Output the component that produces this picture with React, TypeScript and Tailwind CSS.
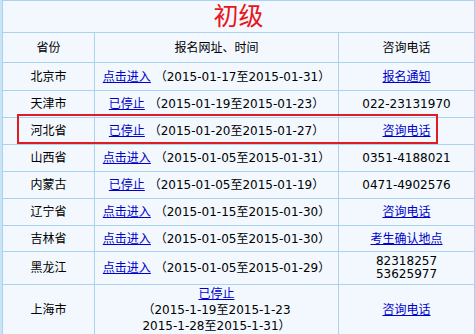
const rows = [
  { p: "北京市", link: "点击进入", time: "（2015-01-17至2015-01-31）", tel: "报名通知", telLink: true, h: "h-[28px]" },
  { p: "天津市", link: "已停止", time: "（2015-01-19至2015-01-23）", tel: "022-23131970", h: "h-[27px]" },
  { p: "河北省", link: "已停止", time: "（2015-01-20至2015-01-27）", tel: "咨询电话", telLink: true, h: "h-[27px]" },
  { p: "山西省", link: "点击进入", time: "（2015-01-05至2015-01-31）", tel: "0351-4188021", h: "h-[27px]" },
  { p: "内蒙古", link: "已停止", time: "（2015-01-05至2015-01-19）", tel: "0471-4902576", h: "h-[27px]" },
  { p: "辽宁省", link: "点击进入", time: "（2015-01-15至2015-01-30）", tel: "咨询电话", telLink: true, h: "h-[27px]" },
  { p: "吉林省", link: "点击进入", time: "（2015-01-05至2015-01-30）", tel: "考生确认地点", telLink: true, h: "h-[26px]" },
];

const cell = "border border-[#aad3f2] text-center align-middle";
const link = "text-[#0000cc] underline";

export default function App() {
  return (
    <div
      className="relative w-[475px] h-[334px] overflow-hidden bg-[#c9e3f7] pl-[2px] text-[12px] text-[#000]"
      style={{ fontFamily: '"DejaVu Sans", "Noto Sans CJK SC", sans-serif' }}
    >
      <table className="w-[472px] table-fixed border-collapse bg-[#f2f8fe]">
        <colgroup>
          <col className="w-[92px]" />
          <col className="w-[244px]" />
          <col className="w-[136px]" />
        </colgroup>
        <tbody>
          <tr className="h-[32px]">
            <td colSpan={3} className={`${cell} text-[25px] leading-none text-[#e8161b]`}>
              初级
            </td>
          </tr>
          <tr className="h-[30px]">
            <td className={cell}>省份</td>
            <td className={cell}>报名网址、时间</td>
            <td className={cell}>咨询电话</td>
          </tr>
          {rows.map((r) => (
            <tr key={r.p} className={r.h}>
              <td className={cell}>{r.p}</td>
              <td className={`${cell} whitespace-nowrap`}>
                <span className={link}>{r.link}</span> {r.time}
              </td>
              <td className={cell}>
                {r.telLink ? <span className={link}>{r.tel}</span> : r.tel}
              </td>
            </tr>
          ))}
          <tr className="h-[33px]">
            <td className={cell}>黑龙江</td>
            <td className={`${cell} whitespace-nowrap`}>
              <span className={link}>点击进入</span> （2015-01-05至2015-01-29）
            </td>
            <td className={`${cell} leading-[13px]`}>
              82318257
              <br />
              53625977
            </td>
          </tr>
          <tr className="h-[50px]">
            <td className={cell}>上海市</td>
            <td className={`${cell} leading-[16px]`}>
              <span className={link}>已停止</span>
              <br />
              （2015-1-19至2015-1-23
              <br />
              2015-1-28至2015-1-31）
            </td>
            <td className={cell}>
              <span className={link}>咨询电话</span>
            </td>
          </tr>
        </tbody>
      </table>

      {/* red highlight box */}
      <div className="absolute left-[17px] top-[114px] w-[421px] h-[30px] border-2 border-[#e01b22]" />
    </div>
  );
}
